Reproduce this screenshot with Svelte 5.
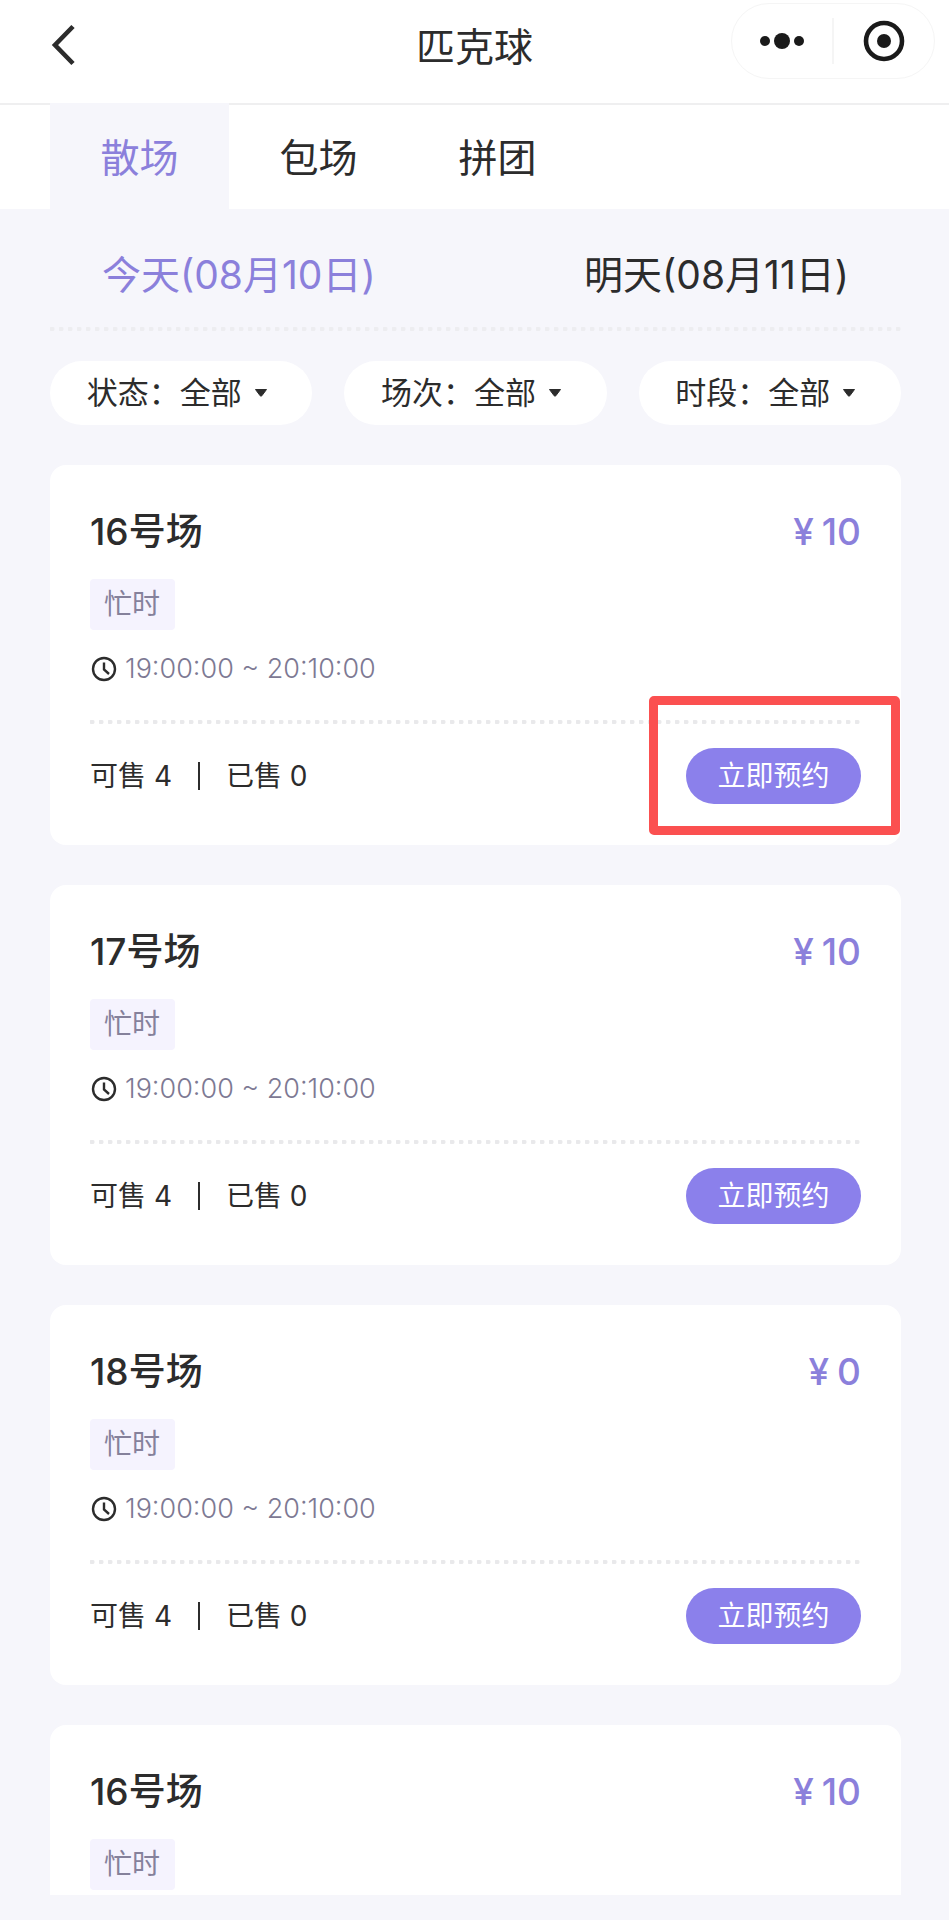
<script lang="ts">
  type Court = {
    name: string;
    price: number;
    tag: string;
    time?: string;
    stock?: { available: number; sold: number };
  };

  const tabs = ['散场', '包场', '拼团'];
  const days = ['今天(08月10日)', '明天(08月11日)'];

  const filters = [
    { id: 'status', label: '状态', options: ['全部', '可约', '约满'] },
    { id: 'session', label: '场次', options: ['全部', '忙时', '闲时'] },
    { id: 'period', label: '时段', options: ['全部', '上午', '下午', '晚上'] },
  ];

  const time = '19:00:00 ~ 20:10:00';
  const stock = { available: 4, sold: 0 };
  const courts: Court[] = [
    { name: '16号场', price: 10, tag: '忙时', time, stock },
    { name: '17号场', price: 10, tag: '忙时', time, stock },
    { name: '18号场', price: 0, tag: '忙时', time, stock },
    { name: '16号场', price: 10, tag: '忙时' },
  ];

  let activeTab = $state(0);
  let activeDay = $state(0);
  // index of the card whose booking button is outlined
  let marked = 0;
</script>

<div class="page">
  <header class="navbar">
    <button type="button" class="back" aria-label="返回">
      <svg width="24" height="42" viewBox="0 0 24 42">
        <path d="M22 2.5 L4 21 L22 39.5" fill="none" stroke="#2c2c2c" stroke-width="4.6" />
      </svg>
    </button>
    <h1>匹克球</h1>
    <div class="capsule">
      <button type="button" aria-label="更多">
        <svg width="46" height="18" viewBox="0 0 46 18">
          <circle cx="6" cy="9" r="5" />
          <circle cx="23" cy="9" r="8" />
          <circle cx="40" cy="9" r="5" />
        </svg>
      </button>
      <span class="capsule-line"></span>
      <button type="button" aria-label="关闭">
        <svg width="42" height="42" viewBox="0 0 42 42">
          <circle cx="21" cy="21" r="18" fill="none" stroke="#1a1a1a" stroke-width="4.6" />
          <circle cx="21" cy="21" r="7" />
        </svg>
      </button>
    </div>
  </header>

  <nav class="tabs">
    {#each tabs as tab, i}
      <button type="button" class="tab" class:active={activeTab === i} onclick={() => (activeTab = i)}>
        {tab}
      </button>
    {/each}
  </nav>

  <div class="days">
    {#each days as day, i}
      <button type="button" class="day" class:active={activeDay === i} onclick={() => (activeDay = i)}>
        {day}
      </button>
    {/each}
  </div>
  <div class="dots dots-faint"></div>

  <div class="filters">
    {#each filters as filter}
      <div class="filter">
        <label for={filter.id}>{filter.label}：</label>
        <select id={filter.id}>
          {#each filter.options as option}
            <option>{option}</option>
          {/each}
        </select>
        <svg class="caret" width="14" height="10" viewBox="0 0 14 10">
          <path d="M1.5 1.5 H12.5 L7.8 7.8 Q7 8.6 6.2 7.8 Z" fill="#2c2c2c" stroke="#2c2c2c" stroke-linejoin="round" />
        </svg>
      </div>
    {/each}
  </div>

  <main class="list">
    {#each courts as court, i}
      <article class="card">
        <div class="card-head">
          <h2>{court.name}</h2>
          <p class="price"><span>¥</span><span>{court.price}</span></p>
        </div>
        <span class="tag">{court.tag}</span>
        {#if court.time}
          <p class="time">
            <svg width="26" height="26" viewBox="0 0 26 26">
              <circle cx="14" cy="13" r="11" />
              <path d="M14 6.5 V13.5 L19 18" />
            </svg>
            {court.time}
          </p>
        {/if}
        {#if court.stock}
          <div class="dots"></div>
          <div class="card-foot">
            <p class="stock">
              <span>可售 {court.stock.available}</span>
              <i></i>
              <span>已售 {court.stock.sold}</span>
            </p>
            <div class="action">
              <button type="button" class="book">立即预约</button>
              {#if i === marked}
                <div class="mark"></div>
              {/if}
            </div>
          </div>
        {/if}
      </article>
    {/each}
  </main>
</div>

<style>
  :global(body) { margin: 0; background: #f6f6fb; }

  .page {
    display: flex;
    flex-direction: column;
    box-sizing: border-box;
    height: 100vh;
    padding-bottom: 25px;
    overflow: hidden;
    background: #f6f6fb;
    color: #2c2c2c;
    font-family: Inter, "Noto Sans CJK SC", sans-serif;
  }
  h1, h2, p { margin: 0; }
  button, select {
    margin: 0;
    padding: 0;
    border: 0;
    background: none;
    color: inherit;
    font: inherit;
    cursor: pointer;
  }
  svg { display: block; flex: none; }

  .navbar {
    display: grid;
    grid-template-columns: 1fr auto 1fr;
    flex: none;
    height: 103px;
    background: #fff;
  }
  .back { justify-self: start; align-self: start; padding: 24px 20px 24px 51px; }
  h1 { padding-top: 19px; font-size: 39px; font-weight: 400; line-height: 56px; }
  .capsule {
    display: flex;
    align-items: center;
    justify-self: end;
    box-sizing: border-box;
    width: 204px;
    height: 76px;
    margin: 3px 14px 0 0;
    border: 1px solid #f5f5f5;
    border-radius: 38px;
    fill: #1a1a1a;
  }
  .capsule button { display: flex; flex: 1; justify-content: center; }
  .capsule-line { width: 2px; height: 46px; background: #f5f5f5; }

  .tabs {
    display: flex;
    flex: none;
    height: 104px;
    padding-left: 50px;
    border-top: 2px solid #efeff0;
    background: #fff;
  }
  .tab { width: 179px; padding-top: 2px; font-size: 39px; line-height: 56px; }
  .tab.active { margin-top: -2px; padding-top: 4px; background: #f6f6fb; color: #8b80db; }

  .days {
    display: flex;
    flex: none;
    justify-content: space-between;
    padding: 38px 100px 24px 102px;
  }
  .day { font-size: 39px; line-height: 56px; }
  .day.active { color: #8b80db; }

  .dots {
    height: 4px;
    background: radial-gradient(circle at 2px 2px, #e9e9eb 2px, transparent 3px) 0 0 / 9px 4px repeat-x;
  }
  .dots-faint { flex: none; margin: 0 48px 0 50px; opacity: 0.7; }

  .filters { display: flex; flex: none; gap: 32px; padding: 30px 48px 40px 50px; }
  .filter {
    display: flex;
    flex: 1;
    align-items: center;
    justify-content: center;
    height: 64px;
    padding-right: 8px;
    border-radius: 32px;
    background: #fff;
    font-size: 31px;
    line-height: 44px;
    white-space: nowrap;
  }
  .filter select { appearance: none; }
  .caret { margin-left: 12px; }

  .list {
    display: flex;
    flex: 1;
    flex-direction: column;
    gap: 40px;
    min-height: 0;
    margin: 0 48px 0 50px;
    overflow-y: auto;
    scrollbar-width: none;
  }
  .card {
    flex: none;
    padding: 41px 40px;
    border-radius: 16px;
    background: #fff;
    font-size: 28px;
    line-height: 40px;
  }
  .card-head { display: flex; justify-content: space-between; }
  .card-head h2, .price { font-size: 37px; line-height: 52px; }
  h2 { font-weight: 500; }
  .price { display: flex; gap: 8px; color: #8b80db; font-weight: 500; }
  .tag {
    display: block;
    width: fit-content;
    margin-top: 21px;
    padding: 5px 15px 6px 14px;
    border-radius: 4px;
    background: #f5f3fe;
    color: #85819b;
  }
  .time {
    display: flex;
    gap: 9px;
    align-items: center;
    margin: 19px 0 31px;
    color: #7d7993;
    font-size: 27px;
    font-weight: 300;
  }
  .time svg { fill: none; stroke: #2c2c2c; stroke-width: 2.4; overflow: visible; }
  .card-foot {
    display: flex;
    align-items: center;
    justify-content: space-between;
    margin-top: 24px;
  }
  .stock { display: flex; align-items: center; }
  .stock i { width: 2px; height: 28px; margin: 0 26px; background: #2c2c2c; }
  .action { position: relative; }
  .book {
    display: block;
    width: 175px;
    height: 56px;
    border-radius: 28px;
    background: #8b80eb;
    color: #fff;
    line-height: 40px;
  }
  /* callout frame around the booking button */
  .mark {
    position: absolute;
    inset: -52px -39px -31px -37px;
    border: 9px solid #fb5050;
    border-radius: 5px;
    pointer-events: none;
  }
</style>
